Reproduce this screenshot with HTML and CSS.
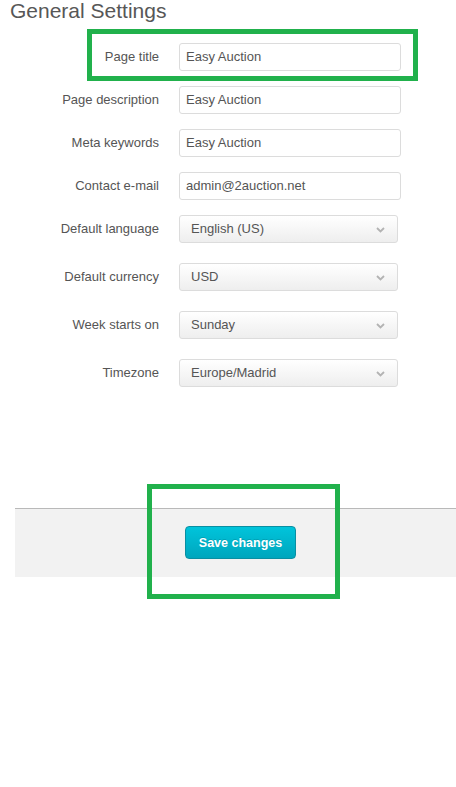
FILE: index.html
```html
<!DOCTYPE html>
<html>
<head>
<meta charset="utf-8">
<link rel="stylesheet" href="styles.css">
</head>
<body>
<h1 class="page-title">General Settings</h1>
<form class="settings">
  <div class="row"><label class="lbl">Page title</label><input class="field text" type="text" value="Easy Auction"></div>
  <div class="row"><label class="lbl">Page description</label><input class="field text" type="text" value="Easy Auction"></div>
  <div class="row"><label class="lbl">Meta keywords</label><input class="field text" type="text" value="Easy Auction"></div>
  <div class="row"><label class="lbl">Contact e-mail</label><input class="field text" type="text" value="admin@2auction.net"></div>
  <div class="row sel-row"><label class="lbl">Default language</label><div class="field select"><span>English (US)</span><svg class="chev" width="9" height="6" viewBox="0 0 9 6"><path d="M1 1 L4.5 4.5 L8 1" fill="none" stroke="#b3b3b3" stroke-width="1.8"/></svg></div></div>
  <div class="row sel-row"><label class="lbl">Default currency</label><div class="field select"><span>USD</span><svg class="chev" width="9" height="6" viewBox="0 0 9 6"><path d="M1 1 L4.5 4.5 L8 1" fill="none" stroke="#b3b3b3" stroke-width="1.8"/></svg></div></div>
  <div class="row sel-row"><label class="lbl">Week starts on</label><div class="field select"><span>Sunday</span><svg class="chev" width="9" height="6" viewBox="0 0 9 6"><path d="M1 1 L4.5 4.5 L8 1" fill="none" stroke="#b3b3b3" stroke-width="1.8"/></svg></div></div>
  <div class="row sel-row"><label class="lbl">Timezone</label><div class="field select"><span>Europe/Madrid</span><svg class="chev" width="9" height="6" viewBox="0 0 9 6"><path d="M1 1 L4.5 4.5 L8 1" fill="none" stroke="#b3b3b3" stroke-width="1.8"/></svg></div></div>
</form>
<div class="footer"><button class="btn" type="button">Save changes</button></div>
<div class="highlight hl-title"></div>
<div class="highlight hl-save"></div>
</body>
</html>
```
FILE: styles.css
```css
html, body {
  margin: 0;
  padding: 0;
  background: #fff;
}
body {
  font-family: "Liberation Sans", Arial, sans-serif;
  color: #555;
  width: 456px;
  position: relative;
  min-height: 787px;
}
.page-title {
  margin: 0;
  padding-left: 10px;
  font-size: 21px;
  font-weight: normal;
  line-height: 22px;
  color: #575757;
}
.settings {
  margin: 21px 0 0 0;
  display: flex;
  flex-direction: column;
  gap: 15px;
}
.row {
  display: flex;
  align-items: center;
  gap: 20px;
  height: 28px;
}
.sel-row + .sel-row {
  margin-top: 5px;
}
.lbl {
  width: 159px;
  text-align: right;
  font-size: 13px;
  color: #555;
  flex: none;
  padding-bottom: 2px;
}
.field {
  box-sizing: border-box;
  height: 28px;
  border: 1px solid #dcdcdc;
  border-radius: 3px;
  font-family: "Liberation Sans", Arial, sans-serif;
  font-size: 13px;
  color: #555;
  margin: 0;
}
.text {
  width: 222px;
  padding: 0 6px 2px 6px;
  background: #fff;
  outline: none;
}
.select {
  width: 219px;
  padding: 0 11px 2px 11px;
  display: flex;
  align-items: center;
  justify-content: space-between;
  background: linear-gradient(#ffffff, #eeeeee);
}
.chev {
  display: block;
  margin-right: 1px;
  margin-top: 4px;
}
.footer {
  margin: 121px 0 0 15px;
  border-top: 1px solid #b9b9b9;
  background: #f2f2f2;
  height: 69px;
  box-sizing: border-box;
  padding: 17px 0 0 170px;
}
.btn {
  width: 111px;
  height: 33px;
  box-sizing: border-box;
  border: 1px solid #0a8fa2;
  border-radius: 4px;
  background: linear-gradient(#00c4db, #00a6bd);
  color: #fff;
  font-family: "Liberation Sans", Arial, sans-serif;
  font-weight: bold;
  font-size: 12.5px;
  text-shadow: 0 -1px 0 rgba(0,0,0,0.15);
  padding: 0;
  cursor: pointer;
}
.highlight {
  position: absolute;
  border: 5px solid #21b14c;
  box-sizing: border-box;
  pointer-events: none;
}
.hl-title {
  left: 87px;
  top: 29px;
  width: 331px;
  height: 52px;
}
.hl-save {
  left: 147px;
  top: 484px;
  width: 193px;
  height: 115px;
}
```
